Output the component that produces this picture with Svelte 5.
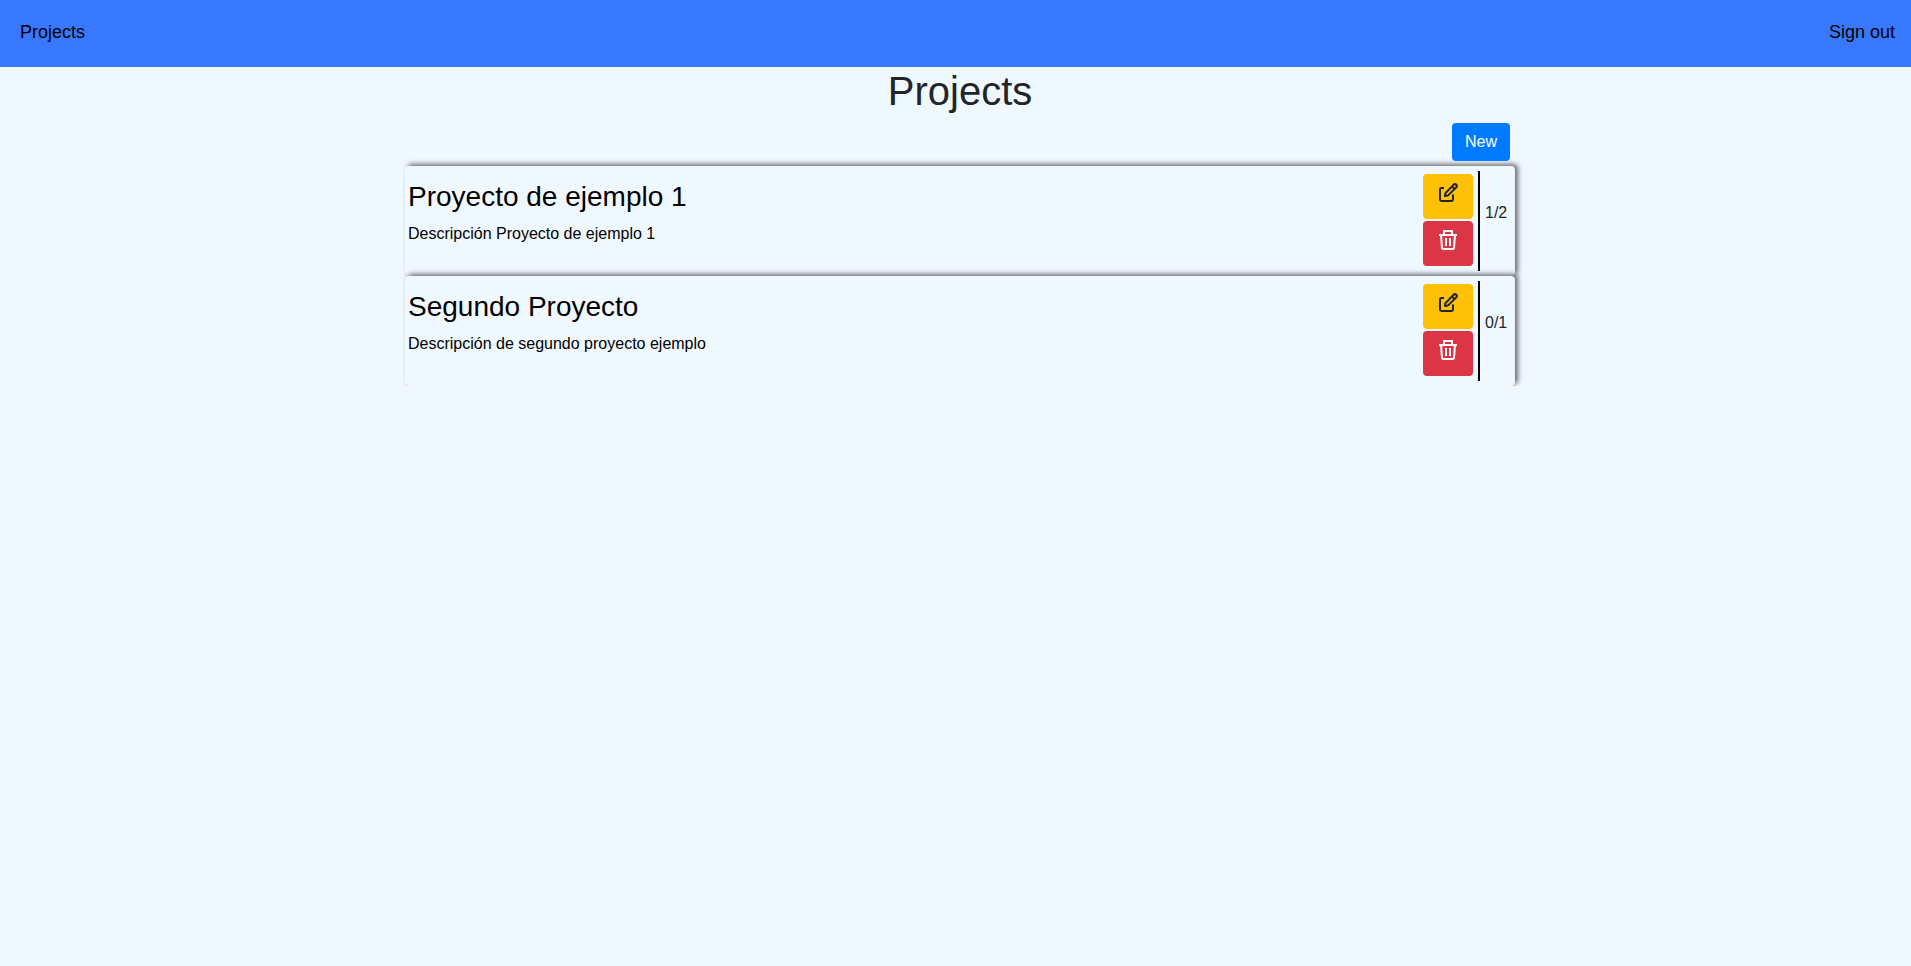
<script>
  const projects = [
    { name: 'Proyecto de ejemplo 1', description: 'Descripción Proyecto de ejemplo 1', done: 1, total: 2 },
    { name: 'Segundo Proyecto', description: 'Descripción de segundo proyecto ejemplo', done: 0, total: 1 }
  ];
</script>

<nav>
  <a href="#projects">Projects</a>
  <a href="#sign-out">Sign out</a>
</nav>

<main>
  <h1>Projects</h1>
  <div class="toolbar">
    <button type="button" class="btn new">New</button>
  </div>
  {#each projects as project}
    <article>
      <a class="info" href="#project">
        <h3>{project.name}</h3>
        <p>{project.description}</p>
      </a>
      <div class="actions">
        <button type="button" class="btn edit" aria-label="Edit">
          <svg viewBox="0 0 20 20" fill="none" stroke="currentColor" stroke-width="2" stroke-linejoin="round">
            <path d="M6 5H3.4Q2 5 2 6.4V16.6Q2 18 3.4 18H13.6Q15 18 15 16.6V11.5" />
            <path d="M7 13L7.4 10.2L15.2 2.1Q17 .4 18.3 1.7Q19.6 3 17.9 4.8L9.8 12.6Z" />
            <path d="M14.2 3.6L16.4 5.8" />
          </svg>
        </button>
        <button type="button" class="btn delete" aria-label="Delete">
          <svg viewBox="0 0 20 20" fill="none" stroke="currentColor" stroke-width="2">
            <path d="M1 5H19M6 5V1H14V5M3 5L4 17.8Q4.1 19 5.3 19H14.7Q15.9 19 16 17.8L17 5" />
            <path d="M8 8V16M12 8V16" />
          </svg>
        </button>
      </div>
      <span class="count">{project.done}/{project.total}</span>
    </article>
  {/each}
</main>

<style>
  :global(body) {
    background: #f0f8ff;
    color: #212529;
    font: 16px/24px "Liberation Sans", Arial, sans-serif;
  }

  :global(*) {
    box-sizing: border-box;
  }

  nav {
    display: flex;
    justify-content: space-between;
    padding: 19px 16px 21px 20px;
    background: #3878ff;
    font-size: 18px;
    line-height: 27px;
  }

  a {
    color: #000;
    text-decoration: none;
  }

  main {
    max-width: 1119px;
    margin: 0 auto;
    padding-left: 9px;
  }

  h1,
  h3 {
    margin: 0 0 8px;
    font-weight: 400;
  }

  h1 {
    font-size: 40px;
    line-height: 48px;
    text-align: center;
  }

  h3 {
    font-size: 28px;
    line-height: 34px;
  }

  p {
    margin: 0;
  }

  .toolbar {
    display: flex;
    justify-content: flex-end;
    padding: 0 5px 5px 0;
  }

  .btn {
    border: 0;
    border-radius: 4px;
    font: inherit;
    cursor: pointer;
  }

  .new {
    height: 38px;
    padding: 0 13px;
    background: #007bff;
    color: #fff;
  }

  article {
    display: flex;
    align-items: stretch;
    padding: 5px 0;
    border-radius: 4px;
    box-shadow: 3px -2px 5px rgb(0 0 0 / 56%), 0 1px 1px rgb(0 0 0 / 12%);
    background: #f0f8ff;
  }

  .info {
    flex: 1;
    padding: 9px 3px 0;
  }

  .actions {
    display: flex;
    flex-direction: column;
    gap: 2px;
    padding: 3px 5px;
  }

  .edit,
  .delete {
    display: flex;
    justify-content: center;
    width: 50px;
    height: 45px;
    padding: 9px 0 0;
  }

  .edit {
    background: #ffc107;
    color: #212529;
  }

  .delete {
    background: #dc3545;
    color: #fff;
  }

  svg {
    width: 20px;
    height: 20px;
  }

  .count {
    width: 37px;
    height: 100px;
    padding: 30px 0 0 5px;
    border-left: 2px solid #000;
  }
</style>
